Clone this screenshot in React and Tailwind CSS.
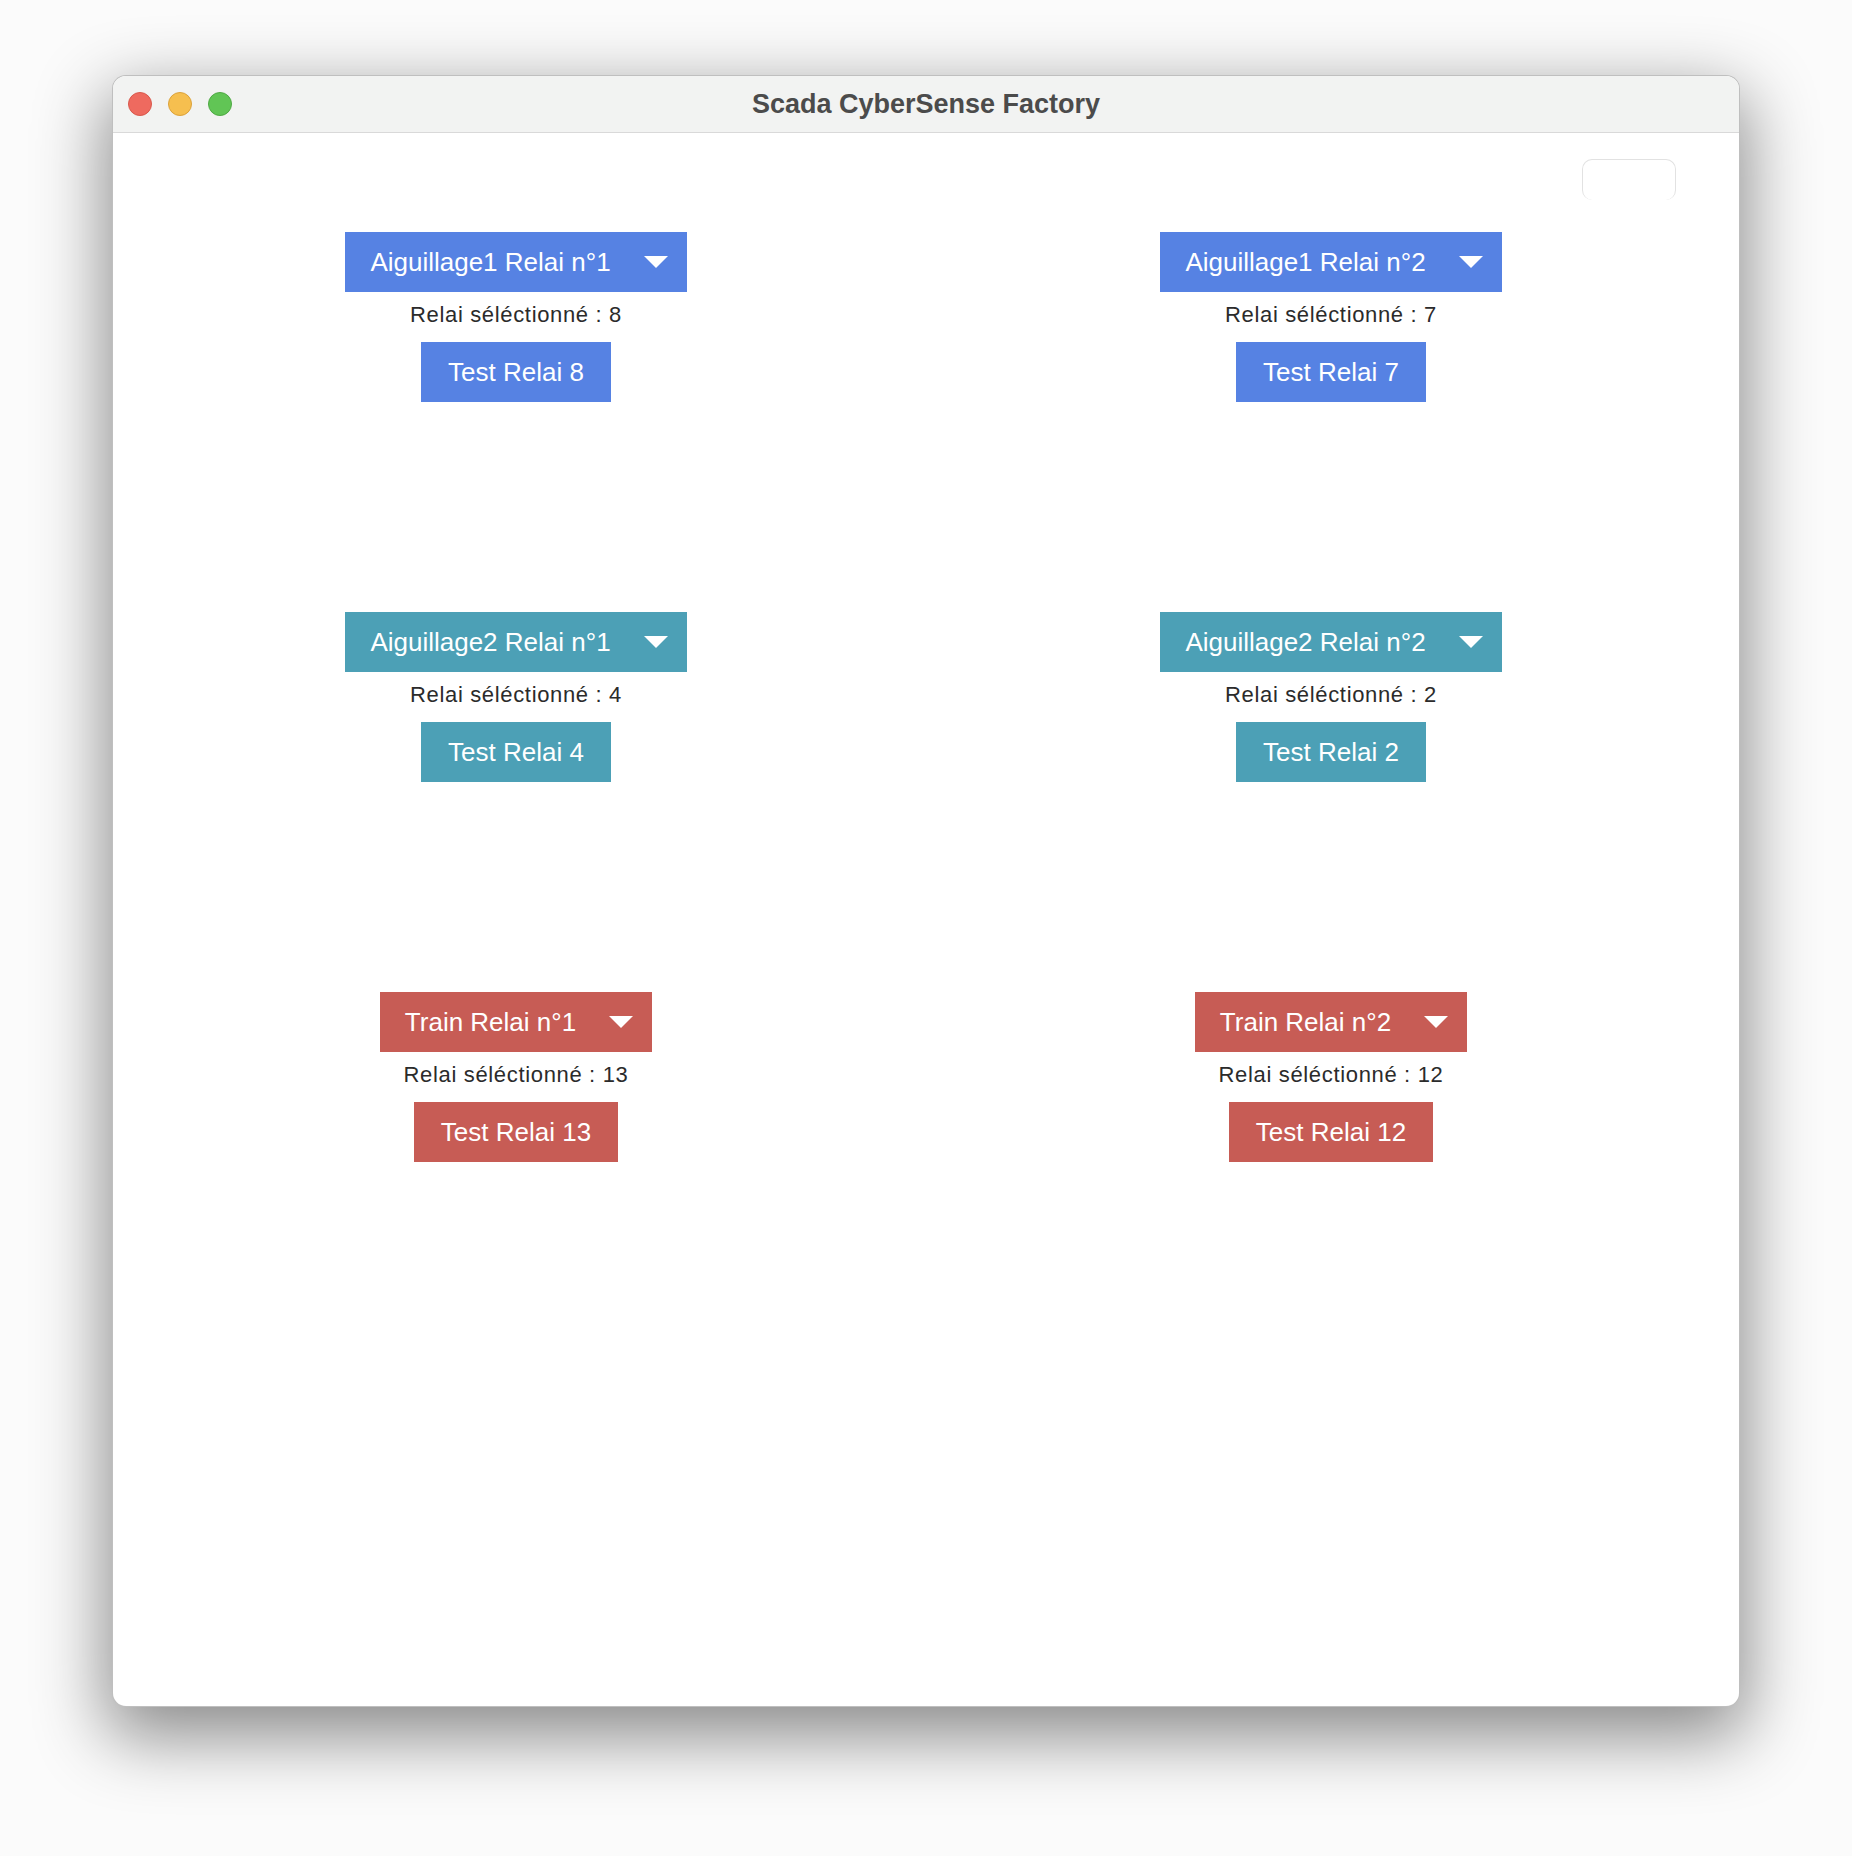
const relays = [
  { title: 'Aiguillage1 Relai n°1', selected: 8, tone: 'bg-[#5682e3]' },
  { title: 'Aiguillage1 Relai n°2', selected: 7, tone: 'bg-[#5682e3]' },
  { title: 'Aiguillage2 Relai n°1', selected: 4, tone: 'bg-[#4ca0b6]' },
  { title: 'Aiguillage2 Relai n°2', selected: 2, tone: 'bg-[#4ca0b6]' },
  { title: 'Train Relai n°1', selected: 13, tone: 'bg-[#c75c55]' },
  { title: 'Train Relai n°2', selected: 12, tone: 'bg-[#c75c55]' },
]

function RelayBlock({ title, selected, tone }) {
  return (
    <div className="flex flex-col items-center">
      <button className={`flex h-[60px] items-center pl-[25px] pr-[19px] text-[26px] text-white ${tone}`}>
        <span>{title}</span>
        <svg className="ml-[33px]" width="24" height="12" viewBox="0 0 24 12">
          <path d="M0 0 H24 L12 12 Z" fill="#fff" />
        </svg>
      </button>
      <div className="flex h-[50px] items-center pb-[5px] text-[22px] tracking-[0.03em] text-[#2b2b2b]">
        Relai séléctionné : {selected}
      </div>
      <button className={`h-[60px] px-[27px] text-[26px] text-white ${tone}`}>
        Test Relai {selected}
      </button>
    </div>
  )
}

export default function App() {
  return (
    <div className="h-[1856px] w-[1852px] bg-[#fbfbfb] pl-[112px] pt-[75px] font-['Liberation_Sans',Arial,sans-serif]">
      <div className="flex h-[1632px] w-[1628px] flex-col overflow-hidden rounded-[14px] border border-black/25 bg-white shadow-[0_24px_70px_6px_rgba(0,0,0,0.45)]">
        <header className="grid h-[57px] grid-cols-[1fr_auto_1fr] items-center border-b border-[#d9d9d9] bg-[#f2f3f2]">
          <div className="flex items-center gap-[16px] pl-[15px]">
            <span className="h-[24px] w-[24px] rounded-full border border-[#d9584c] bg-[#ee6a5f]" />
            <span className="h-[24px] w-[24px] rounded-full border border-[#dca23b] bg-[#f6bf4f]" />
            <span className="h-[24px] w-[24px] rounded-full border border-[#4fa944] bg-[#61c555]" />
          </div>
          <h1 className="text-[27px] font-bold text-[#4b4b4b]">Scada CyberSense Factory</h1>
          <div />
        </header>

        <main className="flex-1 pt-[26px]">
          <div className="flex justify-end pr-[63px]">
            <div className="h-[41px] w-[94px] rounded-[10px] border border-b-0 border-[#e2e2e2] bg-white" />
          </div>
          <div className="mt-[32px] grid grid-cols-[806px_806px] gap-x-[9px] gap-y-[210px]">
            {relays.map((r) => (
              <RelayBlock key={r.title} {...r} />
            ))}
          </div>
        </main>
      </div>
    </div>
  )
}
